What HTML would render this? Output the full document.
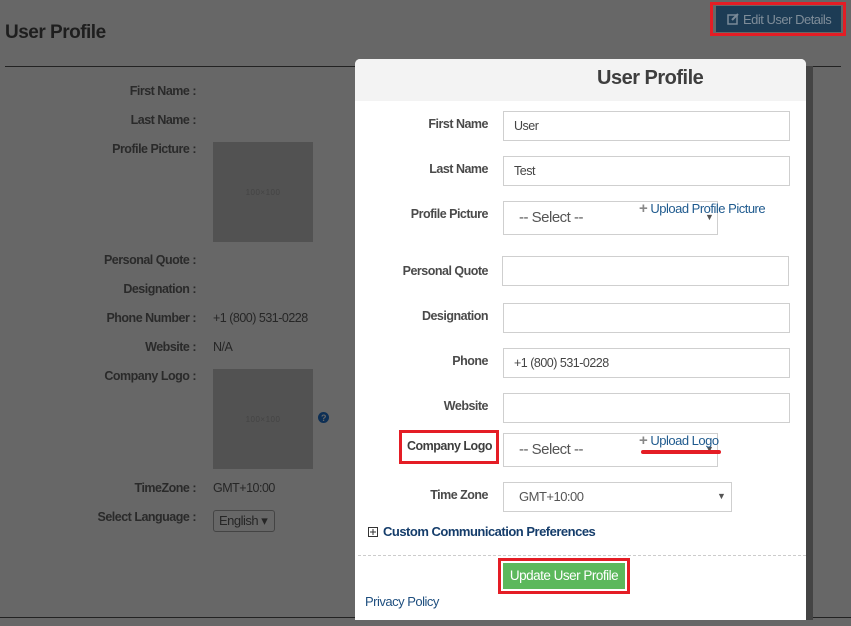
<!DOCTYPE html>
<html><head><meta charset="utf-8">
<style>
*{box-sizing:border-box;margin:0;padding:0}
body{width:851px;height:626px;overflow:hidden;background:#676767;font-family:"Liberation Sans",sans-serif;position:relative;letter-spacing:-0.5px}
.a{position:absolute;white-space:nowrap}
.bl{font-weight:bold;color:#2a2a2a;font-size:12.5px;text-align:right;width:196px;left:0}
.bv{color:#262626;font-size:12.5px;left:213px}
.ph{position:absolute;background:#525252;width:100px;height:100px;left:213px;color:#444;font-size:8px;display:flex;align-items:center;justify-content:center;letter-spacing:0.5px}
.ml{font-weight:bold;color:#4a4a4a;font-size:12.5px;text-align:right;width:133px;left:355px}
.in{position:absolute;border:1px solid #cfcfcf;background:#fff;height:30px;font-size:12.5px;color:#444;padding-left:10px;line-height:28px}
.sel{position:absolute;border:1px solid #cfcfcf;background:#fff;font-size:15px;color:#555;padding-left:15px}
.arr{position:absolute;font-size:9px;color:#555}
.up{color:#1f5a8e;font-size:13px}
.red{position:absolute;border:3px solid #e41d25}
</style></head><body>
<div class="a" style="left:5px;top:22px;font-size:19px;font-weight:bold;color:#1e1e1e">User Profile</div>
<div style="position:absolute;left:5px;top:66px;width:836px;height:1px;background:#222"></div>
<div style="position:absolute;left:0;top:617px;width:851px;height:1px;background:#222"></div>
<div style="position:absolute;left:716px;top:6px;width:125px;height:26px;background:#1d3c55"></div>
<div class="red" style="left:710px;top:2px;width:136px;height:34px"></div>
<svg class="a" style="left:727px;top:13px" width="12" height="12" viewBox="0 0 12 12"><rect x="1" y="2" width="9" height="9" fill="none" stroke="#7a8a98" stroke-width="1.5"/><path d="M5 7 L11 1" stroke="#7a8a98" stroke-width="2"/></svg>
<div class="a" style="left:743px;top:12px;font-size:13px;color:#7f8d99">Edit User Details</div>

<div class="a bl" style="top:84px">First Name :</div>
<div class="a bl" style="top:113px">Last Name :</div>
<div class="a bl" style="top:142px">Profile Picture :</div>
<div class="ph" style="top:142px">100×100</div>
<div class="a bl" style="top:253px">Personal Quote :</div>
<div class="a bl" style="top:282px">Designation :</div>
<div class="a bl" style="top:311px">Phone Number :</div>
<div class="a bv" style="top:311px">+1 (800) 531-0228</div>
<div class="a bl" style="top:340px">Website :</div>
<div class="a bv" style="top:340px">N/A</div>
<div class="a bl" style="top:369px">Company Logo :</div>
<div class="ph" style="top:369px">100×100</div>
<svg class="a" style="left:318px;top:412px" width="11" height="11" viewBox="0 0 11 11"><circle cx="5.5" cy="5.5" r="5.5" fill="#0d2f55"/><text x="5.5" y="9" font-size="9" font-weight="bold" fill="#676767" text-anchor="middle" font-family="Liberation Sans">?</text></svg>
<div class="a bl" style="top:481px">TimeZone :</div>
<div class="a bv" style="top:481px">GMT+10:00</div>
<div class="a bl" style="top:510px">Select Language :</div>
<div class="a" style="left:213px;top:510px;width:62px;height:22px;border:1px solid #444;border-radius:3px;font-size:13px;color:#262626;padding:2px 0 0 5px">English ▾</div>

<div style="position:absolute;left:806px;top:66px;width:7px;height:554px;background:#444"></div>
<div style="position:absolute;left:355px;top:59px;width:451px;height:561px;background:#fff;border-radius:5px 5px 0 0"></div>
<div style="position:absolute;left:355px;top:59px;width:451px;height:42px;background:#f3f3f3;border-radius:5px 5px 0 0"></div>
<div class="a" style="left:597px;top:67px;font-size:20px;font-weight:bold;color:#3e3e3e">User Profile</div>

<div class="a ml" style="top:117px">First Name</div>
<div class="in" style="left:503px;top:111px;width:287px">User</div>
<div class="a ml" style="top:162px">Last Name</div>
<div class="in" style="left:503px;top:156px;width:287px">Test</div>
<div class="a ml" style="top:207px">Profile Picture</div>
<div class="sel" style="left:503px;top:201px;width:215px;height:34px;line-height:32px">-- Select --</div>
<div class="arr" style="left:705px;top:212px">▼</div>
<div class="a up" style="left:639px;top:200px"><b style="color:#888;font-size:15px">+</b> Upload Profile Picture</div>
<div class="a ml" style="top:264px">Personal Quote</div>
<div class="in" style="left:502px;top:256px;width:287px"></div>
<div class="a ml" style="top:309px">Designation</div>
<div class="in" style="left:503px;top:303px;width:287px"></div>
<div class="a ml" style="top:354px">Phone</div>
<div class="in" style="left:503px;top:348px;width:287px">+1 (800) 531-0228</div>
<div class="a ml" style="top:399px">Website</div>
<div class="in" style="left:503px;top:393px;width:287px"></div>
<div class="a" style="left:407px;top:439px;font-size:12.5px;font-weight:bold;color:#3e3e3e">Company Logo</div>
<div class="red" style="left:399px;top:430px;width:100px;height:34px"></div>
<div class="sel" style="left:503px;top:433px;width:215px;height:34px;line-height:32px">-- Select --</div>
<div class="arr" style="left:705px;top:444px">▼</div>
<div class="a up" style="left:639px;top:432px"><b style="color:#888;font-size:15px">+</b> Upload Logo</div>
<div style="position:absolute;left:641px;top:450px;width:80px;height:4px;background:#e41d25;border-radius:2px"></div>
<div class="a ml" style="top:488px">Time Zone</div>
<div class="sel" style="left:503px;top:482px;width:229px;height:30px;line-height:28px;font-size:13px">GMT+10:00</div>
<div class="arr" style="left:717px;top:491px">▼</div>
<svg class="a" style="left:368px;top:527px" width="10" height="10" viewBox="0 0 10 10"><rect x="0.5" y="0.5" width="9" height="9" fill="none" stroke="#333"/><path d="M2 5H8M5 2V8" stroke="#333"/></svg>
<div class="a" style="left:383px;top:524px;font-size:13px;font-weight:bold;color:#153d6b">Custom Communication Preferences</div>
<div style="position:absolute;left:358px;top:555px;width:448px;border-top:1px dashed #ccc"></div>
<div class="red" style="left:498px;top:558px;width:132px;height:36px"></div>
<div class="a" style="left:503px;top:563px;width:122px;height:26px;background:#5cb85c;color:#fff;font-size:13.5px;text-align:center;line-height:26px">Update User Profile</div>
<div class="a" style="left:365px;top:594px;font-size:13px;color:#1f4f7f">Privacy Policy</div>
</body></html>
